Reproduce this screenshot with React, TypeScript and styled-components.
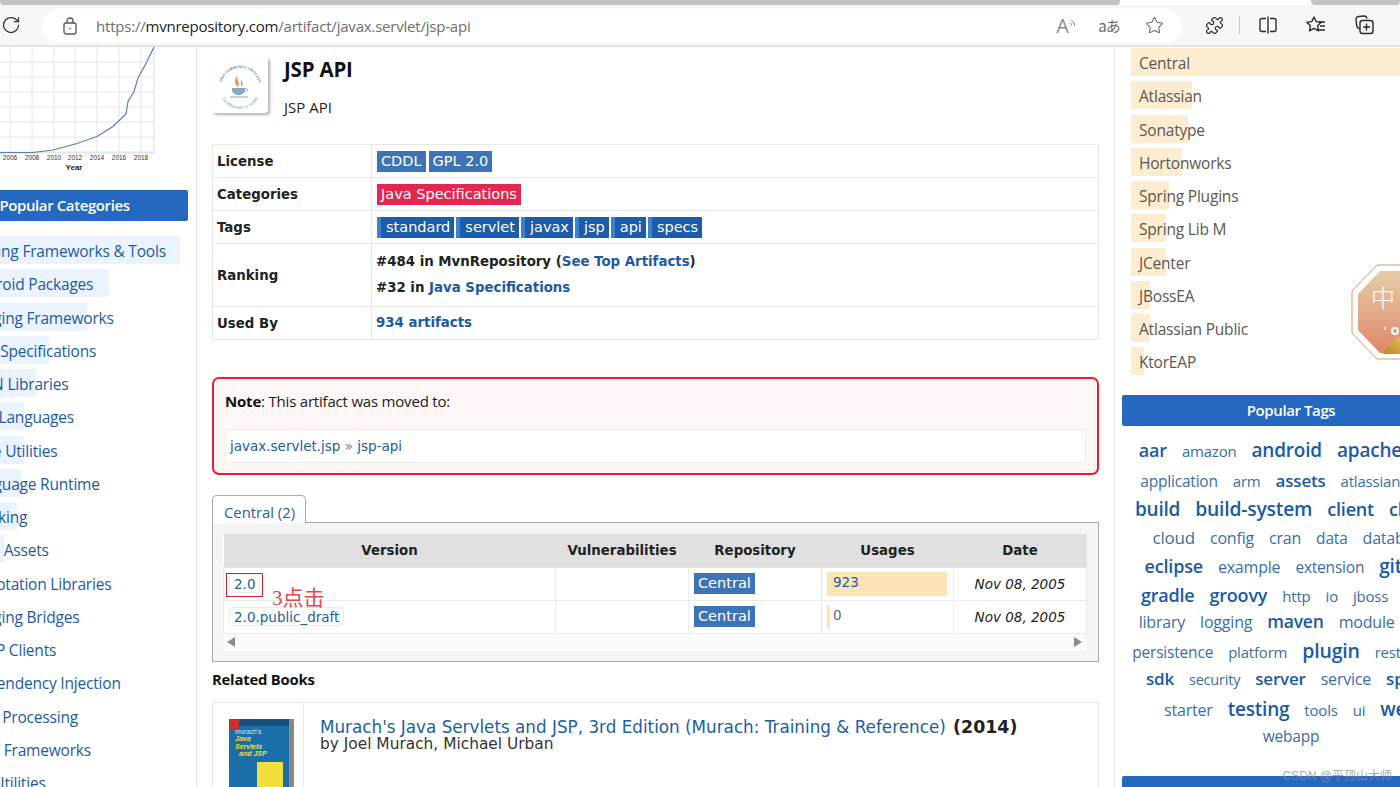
import React from 'react'
import styled, { createGlobalStyle } from 'styled-components'
import { Puzzle, RotateCw, Star } from 'lucide-react'

const UI_FONT = `"Open Sans", "Noto Sans", sans-serif`
const TABLE_FONT = `"DejaVu Sans", Verdana, sans-serif`

const GlobalStyle = createGlobalStyle`
  html, body { margin: 0; height: 787px; overflow: hidden; background: #fff; }
  #root { height: 787px; }
  * { box-sizing: border-box; }
`

const Page = styled.div`
  position: relative;
  width: 1400px;
  height: 787px;
  overflow: hidden;
  display: flex;
  flex-direction: column;
  font-family: ${UI_FONT};
  color: #222;
`

/* browser chrome */
const Chrome = styled.header`
  height: 47px;
  flex: none;
  background: #f7f7f7;
  border-bottom: 2px solid #e2e2e2;
`

const TabStrip = styled.div`
  display: flex;
  height: 5px;
  background: #f7f7f7;
`

const TabEdge = styled.div<{ $w?: number }>`
  flex: ${p => (p.$w ? `0 0 ${p.$w}px` : '1')};
  background: #c2c2c2;
  border-radius: 0 0 4px 4px;
`

const TabGap = styled.div`
  flex: 0 0 191px;
  background: #fdfdfd;
`

const ToolRow = styled.div`
  display: flex;
  align-items: center;
  height: 40px;
`

const ReloadSlot = styled.div`
  width: 42px;
  padding-left: 1px;
  display: flex;
  color: #333;
`

const AddressPill = styled.div`
  width: 1140px;
  height: 33px;
  margin-top: 1px;
  background: #fff;
  border-radius: 17px;
  display: flex;
  align-items: center;
  padding-left: 20px;
  color: #555;
`

const Url = styled.div`
  margin-left: 18px;
  font-size: 15px;
  color: #6f6f6f;
  white-space: nowrap;
  letter-spacing: -0.21px;
  b { font-weight: 400; color: #222; }
`

const PillIcons = styled.div`
  margin-left: auto;
  display: flex;
  align-items: center;
  color: #666;
`

const PillIcon = styled.div<{ $w: number }>`
  width: ${p => p.$w}px;
  display: flex;
  justify-content: center;
  align-items: center;
`

const ReadAloud = styled.span`
  font-size: 20px;
  line-height: 1;
  color: #888;
`

const Translate = styled.span`
  font-family: "Noto Sans CJK JP", ${UI_FONT};
  font-size: 15px;
  color: #6a6a6a;
  letter-spacing: -1px;
`

const ChromeIcons = styled.div`
  display: flex;
  align-items: center;
  color: #2b2b2b;
  margin-left: 8px;
`

const ChromeIcon = styled.div<{ $w: number }>`
  width: ${p => p.$w}px;
  display: flex;
  justify-content: center;
`

const Divider = styled.div`
  width: 1px;
  height: 18px;
  background: #c9c9c9;
  margin: 0 2px 0 1px;
`

/* columns */
const Columns = styled.div`
  flex: 1;
  min-height: 0;
  display: grid;
  grid-template-columns: 197px 918px 1fr;
`

const LeftSide = styled.aside`
  overflow: hidden;
  border-right: 1px solid #e6e6e6;
`

const Chart = styled.svg`
  display: block;
  width: 160px;
  height: 125px;
`

const LeftPanel = styled.div`
  width: 241px;
  margin: 18px 0 0 -53px;
`

const PanelTitle = styled.div<{ $width?: number; $inset?: number }>`
  height: 31px;
  width: ${p => (p.$width ? `${p.$width}px` : '100%')};
  padding-right: ${p => p.$inset || 0}px;
  background: #2468c0;
  border-radius: 2px;
  color: #fff;
  font-size: 15px;
  font-weight: 600;
  text-align: center;
  line-height: 30px;
  letter-spacing: -0.4px;
`

const BarList = styled.ul`
  list-style: none;
  margin: 15px 0 0 9px;
  padding: 0;
  display: flex;
  flex-direction: column;
  gap: 5.27px;
`

const BarItem = styled.li<{ $bar: string; $width: number; $color: string; $indent: number }>`
  height: 28px;
  line-height: 30px;
  padding-left: ${p => p.$indent}px;
  font-size: 15.5px;
  white-space: nowrap;
  letter-spacing: -0.2px;
  color: ${p => p.$color};
  background: linear-gradient(to right, ${p => p.$bar} ${p => p.$width}px, transparent ${p => p.$width}px);
`

const Main = styled.main`
  padding: 10px 16px 0 15px;
  overflow: hidden;
`

const ArtifactHead = styled.div`
  display: flex;
  gap: 16px;
  height: 87px;
`

const LogoBox = styled.div`
  width: 56px;
  height: 56px;
  background: #fff;
  border-radius: 3px;
  box-shadow: 2px 2px 3px rgba(0, 0, 0, 0.3);
`

const ArtifactName = styled.h2`
  margin: -1px 0 0;
  font-size: 20.5px;
  line-height: 26px;
  font-weight: 700;
  color: #111;
  letter-spacing: -0.2px;
`

const ArtifactSub = styled.div`
  margin-top: 15px;
  font-size: 15px;
  line-height: 20px;
  color: #222;
`

const InfoTable = styled.table`
  width: 100%;
  border-collapse: collapse;
  font-family: ${TABLE_FONT};
  font-size: 13.33px;
  table-layout: fixed;

  th, td { border: 1px solid #e8e8e8; padding: 0 5px; height: 33px; text-align: left; }
  th { width: 159px; font-weight: 700; color: #222; padding-left: 4px; }
  td { color: #222; }
`

const RankCell = styled.td`
  && { height: 63px; }
`

const RankLine = styled.div`
  font-weight: 700;
  line-height: 26px;
  color: #222;
  margin-left: -1px;
`

const BoldLink = styled.a`
  color: #1d5aa6;
  font-weight: 700;
`

const Badges = styled.div<{ $gap: number }>`
  display: flex;
  gap: ${p => p.$gap}px;
`

const Badge = styled.span<{ $bg: string }>`
  display: inline-block;
  background: ${p => p.$bg};
  color: #fff;
  padding: 0 4px;
  height: 21px;
  line-height: 21px;
  font-size: 14.5px;
  white-space: nowrap;
  vertical-align: middle;
`

const TagBadge = styled(Badge)`
  background: #1d5bab;
  border-left: 4px solid #3f80d2;
  padding: 0 4px 0 5px;
`

const Note = styled.section`
  margin-top: 37px;
  height: 98px;
  padding: 11px 11px;
  background: #fff6f6;
  border: 2px solid #e8202c;
  border-radius: 7px;
  font-size: 15px;
  color: #222;
  line-height: 22px;
  letter-spacing: -0.2px;
  b { color: #111; }
`

const NoteTarget = styled.div`
  margin-top: 17px;
  height: 34px;
  line-height: 32px;
  padding-left: 4px;
  background: #fff;
  border: 1px solid #eee;
  font-family: ${TABLE_FONT};
  font-size: 13.5px;
  letter-spacing: 0;
  color: #777;
`

const PlainLink = styled.a`
  color: #21609f;
`

const Tab = styled.div`
  margin-top: 20px;
  width: 94px;
  height: 28px;
  border: 1px solid #aaa;
  border-bottom: none;
  border-radius: 5px 5px 0 0;
  background: #fff;
  padding-left: 11px;
  line-height: 32px;
  font-size: 14.8px;
  color: #2a6099;
  position: relative;
  z-index: 1;
  margin-bottom: -1px;
`

const TabPanel = styled.div`
  height: 140px;
  border: 1px solid #aaa;
  background: #f5f5f5;
  padding: 11px 10px 0;
`

const VersionTable = styled.table`
  width: 863px;
  border-collapse: collapse;
  table-layout: fixed;
  background: #fff;
  font-family: ${TABLE_FONT};
  font-size: 13.5px;

  th { background: #e0e0e0; height: 33px; font-weight: 700; font-size: 13.33px; color: #222; padding: 0; }
  td { height: 33px; border: 1px solid #ebebeb; border-top-color: #e4e4e4; padding: 0 5px; position: relative; }
`

const VersionChip = styled.a`
  display: inline-block;
  height: 19px;
  line-height: 18px;
  padding: 0 4px;
  background: #fff;
  border: 1px solid #e6ecf2;
  border-radius: 4px;
  color: #21609f;
  white-space: nowrap;
`

const RedMark = styled.div`
  position: absolute;
  left: 2px;
  top: 5px;
  width: 37px;
  height: 24px;
  border: 1.5px solid #d8232a;
`

const Handwritten = styled.span`
  position: absolute;
  left: 48px;
  top: 18px;
  font-family: "Liberation Serif", "Noto Sans CJK SC", serif;
  font-size: 21px;
  line-height: 24px;
  color: #e2474b;
  white-space: nowrap;
  z-index: 2;
`

const UsageBar = styled.div<{ $width: number; $color: string }>`
  height: 24px;
  line-height: 20px;
  padding-left: 6px;
  color: ${p => p.$color};
  background: linear-gradient(to right, #fde3b8 ${p => p.$width}px, transparent ${p => p.$width}px);
`

const DateCell = styled.td`
  text-align: center;
  font-style: italic;
  color: #222;
`

const FakeScroll = styled.div`
  width: 863px;
  height: 17px;
  background: #fbfbfb;
  display: flex;
  justify-content: space-between;
  align-items: center;
  padding: 0 4px;
`

const Arrow = styled.div<{ $right?: boolean }>`
  width: 0;
  height: 0;
  border-top: 5px solid transparent;
  border-bottom: 5px solid transparent;
  ${p => (p.$right ? 'border-left: 8px solid #8a8a8a;' : 'border-right: 8px solid #8a8a8a;')}
`

const SectionTitle = styled.h3`
  margin: 6px 0 0;
  height: 34px;
  font-size: 14.8px;
  line-height: 22px;
  font-weight: 700;
  color: #111;
  letter-spacing: -0.2px;
`

const BookRow = styled.div`
  display: flex;
  border: 1px solid #e8e8e8;
  height: 100px;
`

const CoverCell = styled.div`
  flex: 0 0 91px;
  border-right: 1px solid #e8e8e8;
  padding: 16px 0 0 16px;
`

const BookInfo = styled.div`
  padding: 14px 0 0 16px;
  font-family: ${TABLE_FONT};
`

const BookTitle = styled.div`
  font-size: 16.8px;
  line-height: 20px;
  color: #222;
  white-space: nowrap;
  a { color: #21609f; }
  b { color: #222; font-size: 17.4px; margin-left: 2px; }
`

const BookAuthor = styled.div`
  font-size: 15.4px;
  line-height: 14px;
  color: #333;
`

const RightSide = styled.aside`
  border-left: 1px solid #e6e6e6;
  margin-left: -1px;
  padding: 1px 0 0 7px;
  overflow: hidden;
`

const RepoList = styled(BarList)`
  margin: 0 0 0 9px;
  width: 320px;
`

const WidePanel = styled.div`
  margin-top: 20px;
`

const TagCloud = styled.div`
  width: 338px;
  margin-top: 10px;
  display: flex;
  flex-direction: column;
`

const CloudRow = styled.div<{ $h: number }>`
  display: flex;
  justify-content: center;
  align-items: baseline;
  gap: 15px;
  height: ${p => p.$h}px;
  white-space: nowrap;
`

const CloudTag = styled.a<{ $size: number; $heavy?: boolean }>`
  font-size: ${p => p.$size}px;
  font-weight: ${p => (p.$heavy ? 600 : 400)};
  color: ${p => (p.$heavy ? '#1b5aa5' : '#3a6ea8')};
  line-height: 28px;
  letter-spacing: -0.2px;
`

const NextTitle = styled.div`
  width: 338px;
  height: 12px;
  margin-top: 26px;
  background: #2468c0;
  border-radius: 2px;
`

const FloatBadge = styled.svg`
  position: absolute;
  left: 1350px;
  top: 264px;
  width: 100px;
  height: 96px;
`

const Watermark = styled.div`
  position: absolute;
  right: 8px;
  bottom: 4px;
  font-size: 12px;
  font-family: "Liberation Sans", "Noto Sans CJK SC", sans-serif;
  color: rgba(140, 140, 140, 0.75);
  white-space: nowrap;
`

const categories: [string, number][] = [
  ['Testing Frameworks & Tools', 224],
  ['Android Packages', 153],
  ['Logging Frameworks', 131],
  ['Java Specifications', 93],
  ['JSON Libraries', 80],
  ['JVM Languages', 68],
  ['Core Utilities', 68],
  ['Language Runtime', 65],
  ['Mocking', 61],
  ['Web Assets', 48],
  ['Annotation Libraries', 40],
  ['Logging Bridges', 38],
  ['HTTP Clients', 36],
  ['Dependency Injection', 34],
  ['XML Processing', 32],
  ['Web Frameworks', 30],
  ['I/O Utilities', 28]
]

const repos: [string, number][] = [
  ['Central', 320],
  ['Atlassian', 61],
  ['Sonatype', 57],
  ['Hortonworks', 51],
  ['Spring Plugins', 38],
  ['Spring Lib M', 35],
  ['JCenter', 35],
  ['JBossEA', 19],
  ['Atlassian Public', 19],
  ['KtorEAP', 13]
]

type CloudWord = [string, number, boolean?]

const cloud: { h: number; words: CloudWord[] }[] = [
  { h: 31, words: [['aar', 18, true], ['amazon', 15], ['android', 19, true], ['apache', 19, true], ['api', 18, true]] },
  { h: 28, words: [['application', 15.5], ['arm', 15], ['assets', 17, true], ['atlassian', 15], ['aws', 15]] },
  { h: 29, words: [['build', 19, true], ['build-system', 19.3, true], ['client', 18, true], ['clojure', 18, true]] },
  { h: 28, words: [['cloud', 17], ['config', 16], ['cran', 16], ['data', 15.5], ['database', 16]] },
  { h: 29, words: [['eclipse', 18, true], ['example', 16], ['extension', 15.5], ['github', 19, true]] },
  { h: 26, words: [['gradle', 18, true], ['groovy', 18, true], ['http', 15], ['io', 15], ['jboss', 15], ['kotlin', 15]] },
  { h: 30, words: [['library', 16], ['logging', 16], ['maven', 17.5, true], ['module', 16], ['npm', 16]] },
  { h: 28, words: [['persistence', 15.5], ['platform', 15], ['plugin', 19.5, true], ['rest', 15], ['scala', 15]] },
  { h: 30, words: [['sdk', 17, true], ['security', 14.5], ['server', 17, true], ['service', 16], ['spring', 17, true]] },
  { h: 27, words: [['starter', 16], ['testing', 19, true], ['tools', 15], ['ui', 15], ['web', 19, true]] },
  { h: 28, words: [['webapp', 15.5]] }
]

const gridX = [10, 32, 54, 75, 97, 119, 141]
const gridY = [15, 30, 45, 60, 75, 90, 105]
const years = ['2006', '2008', '2010', '2012', '2014', '2016', '2018']

const GrowthChart = () => (
  <Chart viewBox='0 0 160 125'>
    {gridX.map(x => <line key={x} x1={x} x2={x} y1={0} y2={106} stroke='#e6e6e6' />)}
    {gridY.map(y => <line key={y} x1={0} x2={154} y1={y} y2={y} stroke='#e6e6e6' />)}
    <line x1={154} x2={154} y1={0} y2={106} stroke='#ddd' />
    <line x1={0} x2={154} y1={106} y2={106} stroke='#ddd' />
    <polyline
      fill='none'
      stroke='#5a80ad'
      strokeWidth={1.2}
      points='0,105.5 33,105.5 53,103 77,96.5 97,89.5 113,79.5 126,67 128,54.5 134,44.5 138,31 147,14.5 154,0'
    />
    {years.map((year, i) => (
      <text key={year} x={gridX[i]} y={113} fontSize={6.5} textAnchor='middle' fill='#333' fontFamily='Liberation Sans'>{year}</text>
    ))}
    <text x={74} y={123} fontSize={8} fontWeight={700} textAnchor='middle' fill='#222' fontFamily='Liberation Sans'>Year</text>
  </Chart>
)

const JavaLogo = () => (
  <svg viewBox='0 0 56 56' width={56} height={56}>
    <defs>
      <path id='ringTop' d='M9 30a19 19 0 0 1 38 0' />
      <path id='ringBottom' d='M8 32a20 20 0 0 0 40 0' />
    </defs>
    <text fontSize={3.6} fill='#5f93ad' fontFamily='Liberation Sans' fontWeight={700}>
      <textPath href='#ringTop' startOffset='50%' textAnchor='middle'>JAVA COMMUNITY PROCESS</textPath>
    </text>
    <text fontSize={3.6} fill='#5f93ad' fontFamily='Liberation Sans'>
      <textPath href='#ringBottom' startOffset='50%' textAnchor='middle'>CELEBRATING 10 YEARS</textPath>
    </text>
    <path d='M26 18c-3 4 3 7 0 12-3-2-5-7 0-12zM30 22c-1 3 2 4 0 8-1-2-2-5 0-8z' fill='#e79a45' />
    <path d='M20 31h13v2c0 3-3 5-6.500 5S20 36 20 33z' fill='#8aa9bd' />
    <path d='M33 32c3-1 4 2 0 3M18 40h18' fill='none' stroke='#8aa9bd' strokeWidth={1} />
  </svg>
)

const LockIcon = () => (
  <svg width={16} height={18} viewBox='0 0 16 18' fill='none' stroke='#555' strokeWidth={1.3}>
    <rect x={2} y={6} width={12} height={11} rx={2} />
    <path d='M5 6V4a3 3 0 0 1 6 0v2' />
    <circle cx={8} cy={11.5} r={0.8} fill='#555' stroke='none' />
  </svg>
)

const SoundWaves = () => (
  <svg width={7} height={14} viewBox='0 0 7 14' fill='none' stroke='#777' strokeWidth={1}>
    <path d='M1 4c1 .6 1.500 1.400 1.500 2.600' />
    <path d='M2.500 1.500c2 1.200 3 3 3 5.500' />
  </svg>
)

const SplitIcon = () => (
  <svg width={20} height={20} viewBox='0 0 20 20' fill='none' stroke='currentColor' strokeWidth={1.4}>
    <path d='M8 3.500H4a2 2 0 0 0-2 2v9a2 2 0 0 0 2 2h4' />
    <path d='M12 3.500h4a2 2 0 0 1 2 2v9a2 2 0 0 1-2 2h-4' />
    <path d='M10 1.500v17' />
  </svg>
)

const FavoritesIcon = () => (
  <svg width={22} height={20} viewBox='0 0 22 20' fill='none' stroke='currentColor' strokeWidth={1.4} strokeLinejoin='round'>
    <path d='M9 2l2.200 4.600 5 .7-3.600 3.500.9 5L9 13.400l-4.500 2.400.9-5L1.800 7.300l5-.7z' />
    <path d='M14 7h6M15 11h5M14 15h6' />
  </svg>
)

const CollectionsIcon = () => (
  <svg width={20} height={20} viewBox='0 0 20 20' fill='none' stroke='currentColor' strokeWidth={1.4}>
    <rect x={5} y={5.500} width={13} height={13} rx={2.500} />
    <path d='M5 14c-2-.5-3-1.500-3.300-3L1 5c-.3-2 .8-3.300 2.500-3.500L9 1c1.500-.1 2.600.7 3 2.500' />
    <path d='M11.500 8.500v7M8 12h7' />
  </svg>
)

const CoverArt = () => (
  <svg viewBox='0 0 66 80' width={66} height={80}>
    <rect x={5} y={0} width={60} height={80} fill='#888' />
    <rect x={0} y={0} width={60} height={80} fill='#1b6fa8' />
    <rect x={0} y={0} width={60} height={7} fill='#184f7c' />
    <rect x={0} y={0} width={10} height={10} fill='#c9302c' />
    <text x={6} y={15} fontSize={6.500} fill='#dfeaf2' fontFamily='Liberation Sans'>murach's</text>
    <text x={6} y={22} fontSize={7} fontWeight={700} fontStyle='italic' fill='#f4dc3c' fontFamily='Liberation Sans'>Java</text>
    <text x={6} y={29.500} fontSize={7} fontWeight={700} fontStyle='italic' fill='#f4dc3c' fontFamily='Liberation Sans'>Servlets</text>
    <text x={10} y={37} fontSize={7} fontWeight={700} fontStyle='italic' fill='#f4dc3c' fontFamily='Liberation Sans'>and JSP</text>
    <rect x={28} y={43} width={26} height={37} fill='#f1dd3c' />
  </svg>
)

const App = () => (
  <>
    <GlobalStyle />
    <Page>
      <Chrome>
        <TabStrip>
          <TabEdge $w={1120} />
          <TabGap />
          <TabEdge />
        </TabStrip>
        <ToolRow>
          <ReloadSlot><RotateCw size={20} strokeWidth={1.5} /></ReloadSlot>
          <AddressPill>
            <LockIcon />
            <Url>https://<b>mvnrepository.com</b>/artifact/javax.servlet/jsp-api</Url>
            <PillIcons>
              <PillIcon $w={24}><ReadAloud>A</ReadAloud><SoundWaves /></PillIcon>
              <PillIcon $w={62}><Translate>aあ</Translate></PillIcon>
              <PillIcon $w={28}><Star size={19} strokeWidth={1.3} /></PillIcon>
              <PillIcon $w={14} />
            </PillIcons>
          </AddressPill>
          <ChromeIcons>
            <ChromeIcon $w={48}><Puzzle size={19} strokeWidth={1.5} /></ChromeIcon>
            <Divider />
            <ChromeIcon $w={52}><SplitIcon /></ChromeIcon>
            <ChromeIcon $w={44}><FavoritesIcon /></ChromeIcon>
            <ChromeIcon $w={54}><CollectionsIcon /></ChromeIcon>
          </ChromeIcons>
        </ToolRow>
      </Chrome>

      <Columns>
        <LeftSide>
          <GrowthChart />
          <LeftPanel>
            <PanelTitle $inset={6}>Popular Categories</PanelTitle>
            <BarList>
              {categories.map(([name, width]) => (
                <BarItem key={name} $bar='#eaf3fe' $width={width} $color='#1d5aa6' $indent={12}>{name}</BarItem>
              ))}
            </BarList>
          </LeftPanel>
        </LeftSide>

        <Main>
          <ArtifactHead>
            <LogoBox><JavaLogo /></LogoBox>
            <div>
              <ArtifactName>JSP API</ArtifactName>
              <ArtifactSub>JSP API</ArtifactSub>
            </div>
          </ArtifactHead>

          <InfoTable>
            <tbody>
              <tr>
                <th>License</th>
                <td><Badges $gap={3}><Badge $bg='#3d74b8'>CDDL</Badge><Badge $bg='#3d74b8'>GPL 2.0</Badge></Badges></td>
              </tr>
              <tr>
                <th>Categories</th>
                <td><Badges $gap={3}><Badge $bg='#e3284f'>Java Specifications</Badge></Badges></td>
              </tr>
              <tr>
                <th>Tags</th>
                <td>
                  <Badges $gap={2}>
                    {['standard', 'servlet', 'javax', 'jsp', 'api', 'specs'].map(tag => (
                      <TagBadge key={tag} $bg='#1d5bab'>{tag}</TagBadge>
                    ))}
                  </Badges>
                </td>
              </tr>
              <tr>
                <th>Ranking</th>
                <RankCell>
                  <RankLine>#484 in MvnRepository (<BoldLink>See Top Artifacts</BoldLink>)</RankLine>
                  <RankLine>#32 in <BoldLink>Java Specifications</BoldLink></RankLine>
                </RankCell>
              </tr>
              <tr>
                <th>Used By</th>
                <td><RankLine><BoldLink>934 artifacts</BoldLink></RankLine></td>
              </tr>
            </tbody>
          </InfoTable>

          <Note>
            <b>Note</b>: This artifact was moved to:
            <NoteTarget><PlainLink>javax.servlet.jsp</PlainLink> » <PlainLink>jsp-api</PlainLink></NoteTarget>
          </Note>

          <Tab>Central (2)</Tab>
          <TabPanel>
            <VersionTable>
              <colgroup>
                <col width={332} />
                <col width={133} />
                <col width={133} />
                <col width={132} />
                <col width={133} />
              </colgroup>
              <thead>
                <tr>
                  <th>Version</th>
                  <th>Vulnerabilities</th>
                  <th>Repository</th>
                  <th>Usages</th>
                  <th>Date</th>
                </tr>
              </thead>
              <tbody>
                <tr>
                  <td>
                    <VersionChip>2.0</VersionChip>
                    <RedMark />
                    <Handwritten>3点击</Handwritten>
                  </td>
                  <td />
                  <td><Badge $bg='#3d74b8'>Central</Badge></td>
                  <td><UsageBar $width={120} $color='#21609f'>923</UsageBar></td>
                  <DateCell>Nov 08, 2005</DateCell>
                </tr>
                <tr>
                  <td><VersionChip>2.0.public_draft</VersionChip></td>
                  <td />
                  <td><Badge $bg='#3d74b8'>Central</Badge></td>
                  <td><UsageBar $width={3} $color='#666'>0</UsageBar></td>
                  <DateCell>Nov 08, 2005</DateCell>
                </tr>
              </tbody>
            </VersionTable>
            <FakeScroll><Arrow /><Arrow $right /></FakeScroll>
          </TabPanel>

          <SectionTitle>Related Books</SectionTitle>
          <BookRow>
            <CoverCell><CoverArt /></CoverCell>
            <BookInfo>
              <BookTitle>
                <a>Murach's Java Servlets and JSP, 3rd Edition (Murach: Training &amp; Reference)</a> <b>(2014)</b>
              </BookTitle>
              <BookAuthor>by Joel Murach, Michael Urban</BookAuthor>
            </BookInfo>
          </BookRow>
        </Main>

        <RightSide>
          <RepoList>
            {repos.map(([name, width]) => (
              <BarItem key={name} $bar='#fdedd0' $width={width} $color='#5c5650' $indent={8}>{name}</BarItem>
            ))}
          </RepoList>
          <WidePanel>
            <PanelTitle $width={338}>Popular Tags</PanelTitle>
            <TagCloud>
              {cloud.map(row => (
                <CloudRow key={row.words[0][0]} $h={row.h}>
                  {row.words.map(([word, size, heavy]) => (
                    <CloudTag key={word} $size={size} $heavy={heavy}>{word}</CloudTag>
                  ))}
                </CloudRow>
              ))}
            </TagCloud>
            <NextTitle />
          </WidePanel>
        </RightSide>
      </Columns>

      <FloatBadge viewBox='0 0 100 96'>
        <defs>
          <linearGradient id='badgeFill' x1='0' y1='0' x2='0' y2='1'>
            <stop offset='0' stopColor='#e6cda8' />
            <stop offset='1' stopColor='#e0876a' />
          </linearGradient>
          <linearGradient id='leafFill' x1='0' y1='1' x2='1' y2='0'>
            <stop offset='0' stopColor='#b8862c' />
            <stop offset='1' stopColor='#edb95a' />
          </linearGradient>
        </defs>
        <polygon points='27,1 73,1 99,27 99,69 73,95 27,95 2,69 2,27' fill='#fff' stroke='#d99a70' strokeWidth={1} />
        <polygon points='30,7 70,7 93,30 93,66 70,89 30,89 8,66 8,30' fill='url(#badgeFill)' />
        <text x={33} y={43} fontSize={24} textAnchor='middle' fill='#fff' fontFamily='Noto Sans CJK SC, sans-serif' fontWeight={300}>中</text>
        <text x={35} y={71} fontSize={11} textAnchor='middle' fill='#fff' fontFamily='Liberation Sans' fontWeight={700}>'</text>
        <circle cx={45} cy={67} r={3} fill='none' stroke='#fff' strokeWidth={2} />
        <path d='M33 90c4-10 10-16 20-17v17z' fill='url(#leafFill)' />
      </FloatBadge>

      <Watermark>CSDN @平顶山大师</Watermark>
    </Page>
  </>
)

export default App
